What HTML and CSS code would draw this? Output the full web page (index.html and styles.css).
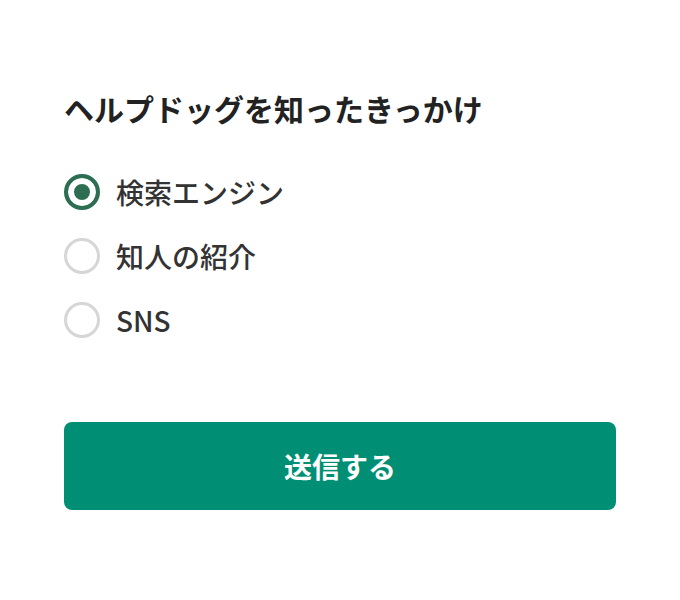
FILE: index.html
```html
<!DOCTYPE html>
<html lang="ja">
<head>
<meta charset="utf-8">
<title>ヘルプドッグを知ったきっかけ</title>
<link rel="stylesheet" href="styles.css">
</head>
<body>
<form class="survey">
  <h1 class="survey-title">ヘルプドッグを知ったきっかけ</h1>
  <div class="options">
    <label class="option">
      <input class="radio" type="radio" name="source" value="search" checked>
      <span class="option-text">検索エンジン</span>
    </label>
    <label class="option">
      <input class="radio" type="radio" name="source" value="friend">
      <span class="option-text">知人の紹介</span>
    </label>
    <label class="option">
      <input class="radio" type="radio" name="source" value="sns">
      <span class="option-text">SNS</span>
    </label>
  </div>
  <button class="submit" type="button">送信する</button>
</form>
</body>
</html>
```

FILE: styles.css
```css
html, body {
  margin: 0;
  padding: 0;
  background: #ffffff;
}

body {
  font-family: "Noto Sans CJK JP", "Noto Sans", sans-serif;
  color: #333333;
}

.survey {
  display: flex;
  flex-direction: column;
  padding: 86px 64px 0;
}

.survey-title {
  margin: 0;
  font-size: 30px;
  line-height: 45px;
  font-weight: 700;
  color: #222222;
  letter-spacing: 0;
}

.options {
  display: flex;
  flex-direction: column;
  margin-top: 29px;
}

.option {
  display: flex;
  align-items: center;
  gap: 16px;
  height: 64px;
  cursor: pointer;
}

.radio {
  appearance: none;
  -webkit-appearance: none;
  margin: 0;
  width: 36px;
  height: 36px;
  flex: 0 0 36px;
  border-radius: 50%;
  border: 3px solid #d6d6d6;
  background: #ffffff;
  box-sizing: border-box;
}

.radio:checked {
  border: 4px solid #2d6e52;
  background: #2d6e52;
  box-shadow: inset 0 0 0 6px #ffffff;
}

.option-text {
  font-size: 28px;
  line-height: 40px;
  font-weight: 500;
  color: #333333;
}

.submit {
  margin-top: 70px;
  height: 88px;
  border: none;
  border-radius: 8px;
  background: #008f74;
  color: #ffffff;
  font-family: "Noto Sans CJK JP", "Noto Sans", sans-serif;
  font-size: 28px;
  font-weight: 700;
  letter-spacing: 0;
  cursor: pointer;
}
```
